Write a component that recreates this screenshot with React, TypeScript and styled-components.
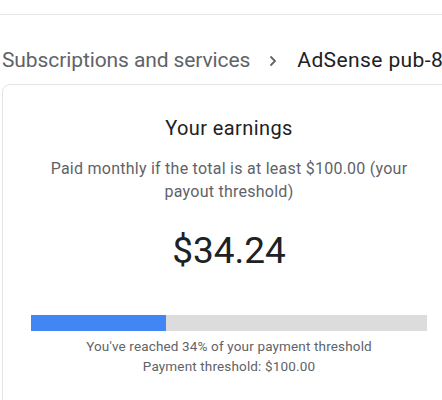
import React from "react";
import styled, { createGlobalStyle } from "styled-components";

const Global = createGlobalStyle`
  html, body {
    margin: 0;
    padding: 0;
    background: #fff;
    overflow: hidden;
  }
  body {
    font-family: Roboto, "Noto Sans", sans-serif;
  }
`;

const ChevronIcon = () => (
  <svg width="8" height="12" viewBox="0 0 8 12">
    <polyline points="1.5,1.5 6,6 1.5,10.5" fill="none" stroke="#5f6368" strokeWidth="1.8" />
  </svg>
);

const App = () => {
  const progress = 34;
  return (
    <Page>
      <Global />
      <TopBar />
      <Breadcrumb>
        <Crumb>Subscriptions and services</Crumb>
        <Chevron>
          <ChevronIcon />
        </Chevron>
        <Current>AdSense pub-8</Current>
      </Breadcrumb>
      <Card>
        <Title>Your earnings</Title>
        <Note>Paid monthly if the total is at least $100.00 (your payout threshold)</Note>
        <Amount>$34.24</Amount>
        <Bar>
          <Fill style={{ width: `${progress}%` }} />
        </Bar>
        <Captions>
          <Caption>You've reached 34% of your payment threshold</Caption>
          <Caption>Payment threshold: $100.00</Caption>
        </Captions>
      </Card>
    </Page>
  );
};

export default App;

const Page = styled.div`
  width: 442px;
  height: 400px;
  overflow: hidden;
  position: relative;
`;

const TopBar = styled.div`
  height: 14px;
  border-bottom: 1px solid #e6e6e6;
`;

const Breadcrumb = styled.div`
  display: flex;
  align-items: center;
  white-space: nowrap;
  padding: 23px 0 0 2px;
  height: 44px;
  font-size: 21px;
  letter-spacing: -0.1px;
`;

const Crumb = styled.span`
  color: #5f6368;
`;

const Chevron = styled.span`
  display: flex;
  margin: 2px 20px 0 19px;
`;

const Current = styled.span`
  color: #202124;
  letter-spacing: 0.4px;
`;

const Card = styled.div`
  margin: 2px 0 0 2px;
  width: 454px;
  height: 340px;
  box-sizing: border-box;
  border: 1px solid #e4e4e4;
  border-radius: 8px;
  padding: 30px 28px 0;
  display: flex;
  flex-direction: column;
  align-items: center;
  text-align: center;
`;

const Title = styled.div`
  font-size: 20px;
  letter-spacing: 0.4px;
  color: #202124;
  line-height: 26px;
`;

const Note = styled.div`
  margin-top: 16px;
  font-size: 16px;
  letter-spacing: 0.25px;
  line-height: 23px;
  color: #5f6368;
  width: 380px;
`;

const Amount = styled.div`
  margin-top: 26px;
  font-size: 37px;
  line-height: 44px;
  color: #202124;
`;

const Bar = styled.div`
  margin-top: 42px;
  width: 100%;
  height: 16px;
  background: #dcdcdc;
`;

const Fill = styled.div`
  height: 100%;
  background: #4285f4;
`;

const Captions = styled.div`
  margin-top: 5px;
  display: flex;
  flex-direction: column;
  align-items: center;
`;

const Caption = styled.div`
  font-size: 13.5px;
  letter-spacing: 0.15px;
  line-height: 20px;
  color: #5f6368;
`;
